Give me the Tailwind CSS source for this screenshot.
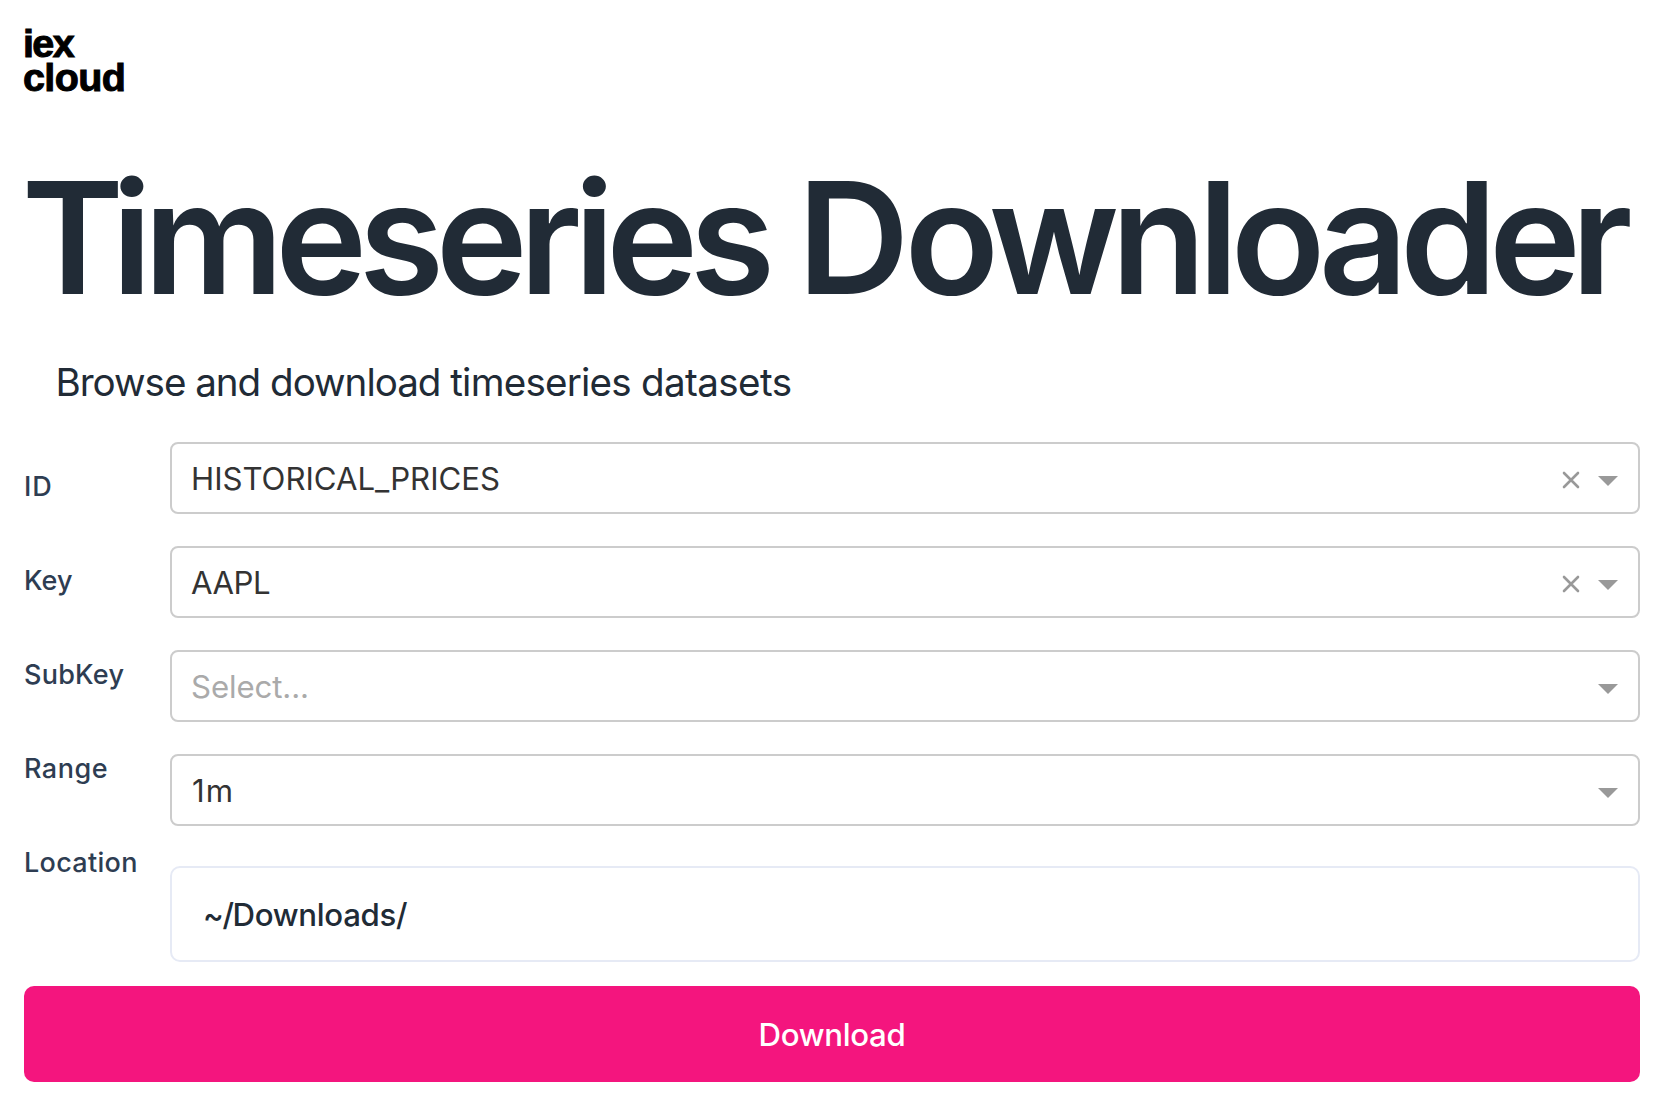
<!DOCTYPE html>
<html lang="en">
<head>
<meta charset="utf-8">
<title>Timeseries Downloader</title>
<script src="https://cdn.jsdelivr.net/npm/@tailwindcss/browser@4"></script>
</head>
<body class="h-[1120px] overflow-hidden bg-white pl-6 pr-[26px] font-['Inter',sans-serif] text-[#333333]">
<header class="h-[158px] pt-[27px]">
  <div class="w-32 font-['Liberation_Sans',sans-serif] text-[39.5px] font-bold leading-[33.5px] text-black [-webkit-text-stroke:1px_black]">
    <div class="-ml-px tracking-[-1.6px]">iex</div>
    <div class="-ml-px tracking-[-0.6px]">cloud</div>
  </div>
</header>
<main>
  <h1 class="-ml-[2.5px] h-[160px] whitespace-nowrap text-[155.5px] font-semibold leading-[160px] tracking-[-8.47px] text-[#212b36]"><span class="tracking-[-12.7px]">T</span>imeseries <span class="tracking-[-5.2px]">D</span><span class="tracking-[-8.1px]">ownload</span><span class="tracking-[-9.9px]">er</span></h1>
  <p class="mt-10 h-12 whitespace-nowrap pl-[31.5px] text-[38.6px] leading-[48px] tracking-[-1.02px] text-[#212b36]">Browse and download <span class="tracking-[-0.78px]">timeseries </span><span class="tracking-[-0.6px]">datasets</span></p>
  <form class="mt-[33px]">
    <div class="grid grid-cols-[146px_1fr]">
      <div class="flex h-[523px] flex-col pt-px text-[27px] font-medium leading-[94px] text-[#2e3d52]">
        <label class="h-[94px] tracking-[1px]">ID</label>
        <label class="h-[94px] tracking-[0.1px]">Key</label>
        <label class="h-[94px] tracking-[0.25px]">SubKey</label>
        <label class="h-[94px] tracking-[0.5px]">Range</label>
        <label class="h-[94px] tracking-[0.3px]">Location</label>
      </div>
      <div class="flex flex-col gap-8 pt-[3px] text-[31.2px]">
        <div class="flex h-[72px] items-center rounded-lg border-2 border-[#cccccc] pl-[19px] pr-5">
          <span class="flex-1 pt-[3px] tracking-[-0.04px]">HISTORICAL_PRICES</span>
          <svg class="mt-[3px] size-[18px]" viewBox="0 0 18 18" stroke="#999" stroke-width="2.6" stroke-linecap="round"><path d="M2 2L16 16M16 2L2 16"/></svg>
          <svg class="ml-[18px] mt-[6px] h-[10px] w-5" viewBox="0 0 20 10" fill="#999"><path d="M0 0H20L10 10Z"/></svg>
        </div>
        <div class="flex h-[72px] items-center rounded-lg border-2 border-[#cccccc] pl-[19px] pr-5">
          <span class="flex-1 pt-[3px] tracking-[-0.5px]">AAPL</span>
          <svg class="mt-[3px] size-[18px]" viewBox="0 0 18 18" stroke="#999" stroke-width="2.6" stroke-linecap="round"><path d="M2 2L16 16M16 2L2 16"/></svg>
          <svg class="ml-[18px] mt-[6px] h-[10px] w-5" viewBox="0 0 20 10" fill="#999"><path d="M0 0H20L10 10Z"/></svg>
        </div>
        <div class="flex h-[72px] items-center rounded-lg border-2 border-[#cccccc] pl-[19px] pr-5">
          <span class="flex-1 pt-[3px] tracking-[-0.1px] text-[#aaaaaa]">Select...</span>
          <svg class="mt-[6px] h-[10px] w-5" viewBox="0 0 20 10" fill="#999"><path d="M0 0H20L10 10Z"/></svg>
        </div>
        <div class="flex h-[72px] items-center rounded-lg border-2 border-[#cccccc] pl-5 pr-5">
          <span class="flex-1 pt-[3px] tracking-[1px]">1m</span>
          <svg class="mt-[6px] h-[10px] w-5" viewBox="0 0 20 10" fill="#999"><path d="M0 0H20L10 10Z"/></svg>
        </div>
        <div class="mt-2 flex h-24 items-center rounded-[10px] border-2 border-[#e6eaf5] pl-[31px] font-medium text-[#212b36]">
          <span class="pt-[3px] tracking-[-0.3px]"><span class="tracking-[-1.4px]">~/</span>Downloads/</span>
        </div>
      </div>
    </div>
    <button type="button" class="mt-6 flex h-24 w-full items-center justify-center rounded-[10px] bg-[#f4157e] pt-[3px] text-[31.2px] font-medium tracking-[-0.3px] text-white">Download</button>
  </form>
</main>
</body>
</html>
